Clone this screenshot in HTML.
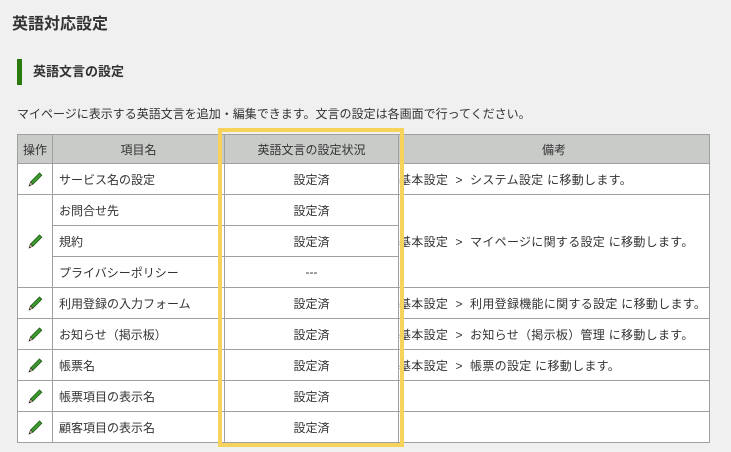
<!DOCTYPE html>
<html><head><meta charset="utf-8"><style>
body{margin:0;background:#eff0ef;font-family:"Liberation Sans","Noto Sans CJK JP",sans-serif;color:#333;width:731px;height:452px;overflow:hidden;position:relative}
h1{position:absolute;left:12px;top:10px;margin:0;font-size:16px;font-weight:bold;color:#333}
.h2{position:absolute;left:17px;top:59px;height:26px;border-left:5px solid #2a7a0c;padding-left:11px;font-size:13px;font-weight:bold;line-height:26px}
.desc{position:absolute;left:17px;top:105px;font-size:12px}
table{position:absolute;left:17px;top:134px;border-collapse:collapse;font-size:12px;background:#fff}
td,th{border:1px solid #a0a0a0;padding:0;height:30px}
th{background:#c8cbc8;font-weight:normal;height:28px}
.c{text-align:center}
.l{padding-left:6px}
.r{letter-spacing:0.3px;white-space:nowrap}
.yb{position:absolute;left:218px;top:128px;width:178px;height:311px;border:4px solid #f7d35c}
</style></head><body>
<h1>英語対応設定</h1>
<div class="h2">英語文言の設定</div>
<div class="desc">マイページに表示する英語文言を追加・編集できます。文言の設定は各画面で行ってください。</div>
<svg width="0" height="0" style="position:absolute"><defs><g id="p"><path d="M3.5 13 L12.5 4 L14.8 6.3 L5.8 15.3 Z" fill="#3c9a2e" stroke="#1f5a15" stroke-width=".8"/><path d="M3.5 13 L2 17 L5.8 15.3 Z" fill="#e8c89a" stroke="#333" stroke-width=".6"/><path d="M2 17 L2.7 15.2 L3.8 16.3Z" fill="#222"/></g></defs></svg>
<table>
<colgroup><col style="width:35px"><col style="width:172px"><col style="width:174px"><col style="width:311px"></colgroup>
<tr><th>操作</th><th>項目名</th><th>英語文言の設定状況</th><th>備考</th></tr>
<tr><td class="c"><svg width="17" height="18"><use href="#p"/></svg></td><td class="l">サービス名の設定</td><td class="c">設定済</td><td class="r">基本設定 &nbsp;&gt;&nbsp; システム設定 に移動します。</td></tr>
<tr><td class="c" rowspan="3"><svg width="17" height="18"><use href="#p"/></svg></td><td class="l">お問合せ先</td><td class="c">設定済</td><td class="r" rowspan="3">基本設定 &nbsp;&gt;&nbsp; マイページに関する設定 に移動します。</td></tr>
<tr><td class="l">規約</td><td class="c">設定済</td></tr>
<tr><td class="l">プライバシーポリシー</td><td class="c">---</td></tr>
<tr><td class="c"><svg width="17" height="18"><use href="#p"/></svg></td><td class="l">利用登録の入力フォーム</td><td class="c">設定済</td><td class="r">基本設定 &nbsp;&gt;&nbsp; 利用登録機能に関する設定 に移動します。</td></tr>
<tr><td class="c"><svg width="17" height="18"><use href="#p"/></svg></td><td class="l">お知らせ（掲示板）</td><td class="c">設定済</td><td class="r">基本設定 &nbsp;&gt;&nbsp; お知らせ（掲示板）管理 に移動します。</td></tr>
<tr><td class="c"><svg width="17" height="18"><use href="#p"/></svg></td><td class="l">帳票名</td><td class="c">設定済</td><td class="r">基本設定 &nbsp;&gt;&nbsp; 帳票の設定 に移動します。</td></tr>
<tr><td class="c"><svg width="17" height="18"><use href="#p"/></svg></td><td class="l">帳票項目の表示名</td><td class="c">設定済</td><td></td></tr>
<tr><td class="c"><svg width="17" height="18"><use href="#p"/></svg></td><td class="l">顧客項目の表示名</td><td class="c">設定済</td><td></td></tr>
</table>
<div class="yb"></div>
</body></html>
